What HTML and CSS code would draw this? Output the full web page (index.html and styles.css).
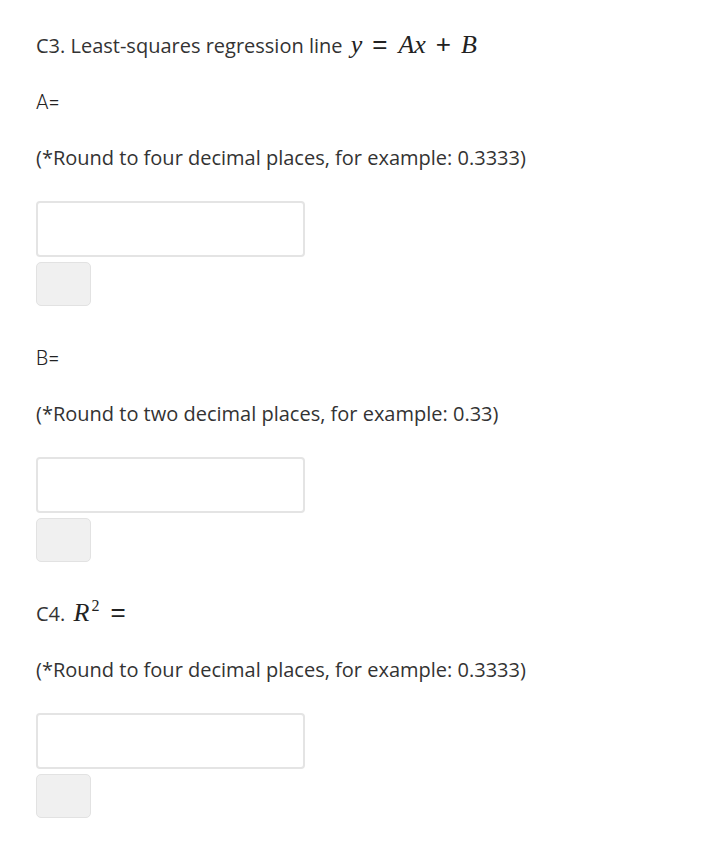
FILE: index.html
```html
<!DOCTYPE html>
<html>
<head>
<meta charset="utf-8">
<link rel="stylesheet" href="styles.css">
</head>
<body>
<div class="page">
  <p class="q">C3. Least-squares regression line <span class="math"><i>y</i><span class="rel">=</span><i>Ax</i><span class="bin">+</span><i>B</i></span></p>
  <p class="lbl">A=</p>
  <p class="q">(*Round to four decimal places, for example: 0.3333)</p>
  <div class="field"><input class="box" type="text"><button class="btn"></button></div>
  <p class="lbl">B=</p>
  <p class="q">(*Round to two decimal places, for example: 0.33)</p>
  <div class="field"><input class="box" type="text"><button class="btn"></button></div>
  <p class="q">C4. <span class="math"><i>R</i><sup>2</sup><span class="rel wide">=</span></span></p>
  <p class="q">(*Round to four decimal places, for example: 0.3333)</p>
  <div class="field"><input class="box" type="text"><button class="btn"></button></div>
</div>
</body>
</html>
```
FILE: styles.css
```css
body {
  margin: 0;
  background: #fff;
  font-family: "Open Sans", sans-serif;
  color: #333;
}
.page {
  padding: 31px 36px 30px;
  display: flex;
  flex-direction: column;
}
p { margin: 0; }
.q {
  font-size: 20px;
  line-height: 30px;
  height: 30px;
  margin-bottom: 26px;
}
.lbl {
  font-family: Roboto, "Liberation Sans", Arial, sans-serif;
  font-weight: 300;
  font-size: 20px;
  line-height: 30px;
  height: 30px;
  margin-bottom: 26px;
  color: #222;
}
.q + .field { margin-top: 2px; }
.math {
  font-family: "Liberation Serif", "Times New Roman", serif;
  font-size: 26px;
  line-height: 1;
  color: #222;
  margin-left: 3px;
}
.math i { font-style: italic; }
.math .rel,
.math .bin {
  font-family: "Liberation Sans", Arial, sans-serif;
  font-weight: normal;
}
.math .rel { padding: 0 11px 0 10px; }
.math .bin { padding: 0 10px 0 10px; }
.math .wide { padding-left: 11px; }
.math sup { font-size: 16px; font-style: normal; vertical-align: 10px; line-height: 0; margin-left: 2px; }
.field {
  display: flex;
  flex-direction: column;
  gap: 5px;
  margin-bottom: 37px;
}
.box {
  width: 269px;
  height: 56px;
  box-sizing: border-box;
  border: 2px solid #e4e4e4;
  border-radius: 4px;
  margin: 0;
}
.btn {
  width: 55px;
  height: 44px;
  background: #f0f0f0;
  border: 1px solid #e2e2e2;
  border-radius: 5px;
  padding: 0;
}
```
